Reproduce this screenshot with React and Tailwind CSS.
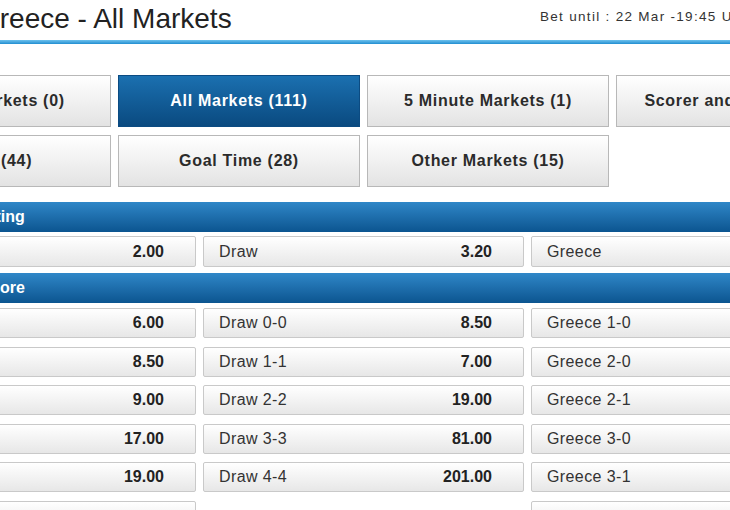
const TABS = [
  { label: 'Player Markets (0)' },
  { label: 'All Markets (111)', active: true },
  { label: '5 Minute Markets (1)' },
  { label: 'Scorer and Result (12)' },
  { label: 'Goals (44)' },
  { label: 'Goal Time (28)' },
  { label: 'Other Markets (15)' },
]

const MATCH_BETTING = [
  [
    { label: 'Bosnia', odds: '2.00' },
    { label: 'Draw', odds: '3.20' },
    { label: 'Greece', odds: '3.75' },
  ],
]

const CORRECT_SCORE = [
  [
    { label: 'Bosnia 1-0', odds: '6.00' },
    { label: 'Draw 0-0', odds: '8.50' },
    { label: 'Greece 1-0', odds: '13.00' },
  ],
  [
    { label: 'Bosnia 2-0', odds: '8.50' },
    { label: 'Draw 1-1', odds: '7.00' },
    { label: 'Greece 2-0', odds: '26.00' },
  ],
  [
    { label: 'Bosnia 2-1', odds: '9.00' },
    { label: 'Draw 2-2', odds: '19.00' },
    { label: 'Greece 2-1', odds: '21.00' },
  ],
  [
    { label: 'Bosnia 3-0', odds: '17.00' },
    { label: 'Draw 3-3', odds: '81.00' },
    { label: 'Greece 3-0', odds: '81.00' },
  ],
  [
    { label: 'Bosnia 3-1', odds: '19.00' },
    { label: 'Draw 4-4', odds: '201.00' },
    { label: 'Greece 3-1', odds: '67.00' },
  ],
  // last row only peeks in at the bottom edge
  [{ label: '', odds: '' }, null, { label: '', odds: '' }],
]

function Tab({ label, active }) {
  return (
    <div
      className={
        active
          ? 'h-[52px] flex items-center justify-center border border-[#0b4b82] bg-linear-to-b from-[#1b70b0] to-[#0a4a80] text-white text-[16px] font-bold tracking-[0.7px]'
          : 'h-[52px] flex items-center justify-center border border-[#b8b8b8] bg-linear-to-b from-white to-[#e3e3e3] text-[#2b2b2b] text-[16px] font-bold tracking-[0.7px]'
      }
    >
      {label}
    </div>
  )
}

function Header({ children }) {
  return (
    <div className="h-[30px] flex items-center pl-[50px] bg-linear-to-b from-[#2f87c8] to-[#0b5590] text-white text-[16px] font-bold">
      {children}
    </div>
  )
}

function Cell({ cell, h }) {
  if (!cell) return <div />
  return (
    <div className={`${h} flex items-center justify-between pl-[15px] pr-[31px] border border-[#c9c9c9] rounded-[2px] bg-linear-to-b from-white to-[#e7e7e7]`}>
      <span className="text-[16px] tracking-[0.4px] text-[#333]">{cell.label}</span>
      <span className="text-[16px] font-bold text-[#222]">{cell.odds}</span>
    </div>
  )
}

export default function App() {
  return (
    <div className="w-[730px] h-[510px] overflow-hidden bg-white font-['Liberation_Sans',Arial,sans-serif]">
      <div className="-ml-[131px] w-[989px]">
        {/* title */}
        <div className="flex h-[40px]">
          <div className="w-[671px] pl-[109px] pt-[3px] text-[28px] leading-8 text-[#222]">Greece - All Markets</div>
          <div className="pt-[9px] text-[13.5px] leading-4 tracking-[1.3px] text-[#333] whitespace-nowrap">Bet until : 22 Mar -19:45 UK</div>
        </div>
        <div className="h-[4px] bg-linear-to-b from-[#6cc2ee] to-[#1c8ed0]" />

        {/* market tabs */}
        <div className="mt-[31px] grid grid-cols-4 gap-x-[7px] gap-y-[8px]">
          {TABS.map(t => <Tab key={t.label} {...t} />)}
        </div>

        {/* match betting */}
        <div className="mt-[15px]">
          <Header>Match Betting</Header>
          <div className="mt-[4px] px-[6px] grid grid-cols-3 gap-x-[7px]">
            {MATCH_BETTING[0].map((c, i) => <Cell key={i} cell={c} h="h-[31px]" />)}
          </div>
        </div>

        {/* correct score */}
        <div className="mt-[6px]">
          <Header>Correct Score</Header>
          <div className="mt-[5px] px-[6px] grid grid-cols-3 gap-x-[7px] gap-y-[8.6px]">
            {CORRECT_SCORE.flatMap((row, r) => row.map((c, i) => <Cell key={r + '-' + i} cell={c} h="h-[30px]" />))}
          </div>
        </div>
      </div>
    </div>
  )
}
